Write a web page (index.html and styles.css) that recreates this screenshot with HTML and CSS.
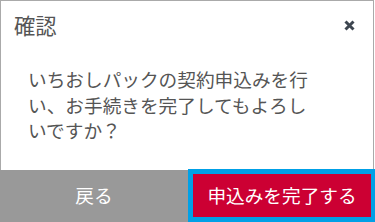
FILE: index.html
```html
<!DOCTYPE html>
<html lang="ja">
<head>
<meta charset="utf-8">
<title>確認</title>
<link rel="stylesheet" href="styles.css">
</head>
<body>
<div class="dialog">
  <div class="header">
    <h1 class="title">確認</h1>
    <button class="close" aria-label="閉じる">
      <svg width="11" height="11" viewBox="0 0 11 11"><path d="M1.5 1.5 L9.5 9.5 M9.5 1.5 L1.5 9.5" stroke="#3d4650" stroke-width="3" stroke-linecap="butt"/></svg>
    </button>
  </div>
  <div class="body">
    <p class="message">いちおしパックの契約申込みを行い、お手続きを完了してもよろしいですか？</p>
  </div>
  <div class="footer">
    <button class="btn btn-back">戻る</button>
    <button class="btn btn-submit">申込みを完了する</button>
  </div>
</div>
</body>
</html>
```
FILE: styles.css
```css
* { box-sizing: border-box; }
html, body { margin: 0; padding: 0; background: #fff; }
body {
  font-family: "Noto Sans CJK JP", "Noto Sans", sans-serif;
  color: #555;
  overflow: hidden;
}
.dialog {
  width: 374px;
  height: 223px;
  border: 1px solid #aaa;
  background: #fff;
  display: flex;
  flex-direction: column;
}
.header {
  height: 46px;
  display: flex;
  align-items: center;
  justify-content: space-between;
  padding: 0 18px 0 13px;
}
.title {
  margin: 0;
  font-size: 21.33px;
  font-weight: normal;
  line-height: 1;
  color: #555;
  padding-top: 2px;
}
.close {
  border: 0;
  background: none;
  padding: 0;
  width: 11px;
  height: 11px;
  display: flex;
  margin-top: 2px;
}
.body {
  padding: 19px 0 0 27px;
  flex: 1;
}
.message {
  margin: 0;
  width: 290px;
  font-size: 18.67px;
  line-height: 25.6px;
  color: #555;
  line-break: strict;
}
.footer {
  display: flex;
  height: 53px;
  margin: 0 -2px 0 -1px;
  align-items: flex-start;
}
.btn {
  font-family: "Noto Sans CJK JP", "Noto Sans", sans-serif;
  font-size: 18.67px;
  color: #fff;
  border: 0;
  padding: 0;
  margin: 0;
  display: flex;
  align-items: center;
  justify-content: center;
}
.btn-back {
  width: 188px;
  height: 52px;
  margin-top: 1px;
  padding-bottom: 3px;
  background: #999;
}
.btn-submit {
  flex: 1;
  height: 53px;
  background: #cc0033;
  border: 5px solid #00a0e6;
  border-right-width: 4px;
  padding-bottom: 3px;
}
```
